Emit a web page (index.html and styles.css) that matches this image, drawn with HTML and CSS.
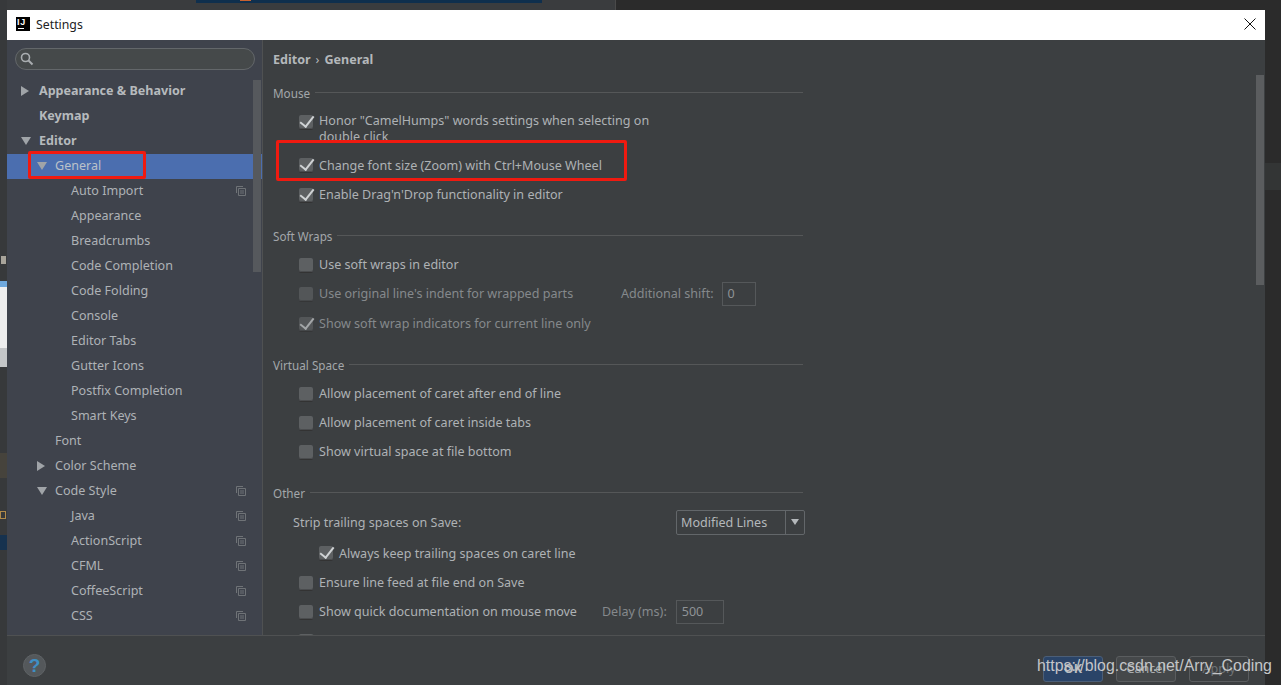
FILE: index.html
```html
<!DOCTYPE html>
<html lang="en">
<head>
<meta charset="utf-8">
<title>Settings</title>
<link rel="stylesheet" href="styles.css">
</head>
<body>
<div class="desk">
  <div class="frag frag-top"></div>
  <div class="frag frag-left"></div>
  <div class="frag frag-bar"></div>
  <div class="frag frag-bar-icon"></div>
  <div class="frag frag-sep2"></div>
  <div class="frag frag-white"></div>
  <div class="frag frag-white-top"></div>
  <div class="frag frag-white-low"></div>
  <div class="frag frag-icon"></div>
  <div class="frag frag-brown"></div>
  <div class="frag frag-orange"></div>
  <div class="frag frag-navy"></div>
  <div class="frag frag-band"></div>
</div>
<div class="dialog">
  <header class="titlebar">
    <span class="logo"><span class="logo-text">IJ</span><span class="logo-line"></span></span>
    <span class="title">Settings</span>
    <svg class="close" width="12" height="12" viewBox="0 0 12 12"><path d="M.5.5l11 11M11.500.5l-11 11" stroke="#111" stroke-width="1" fill="none"/></svg>
  </header>
  <div class="main">
    <aside class="side">
      <div class="search">
        <svg width="14" height="14" viewBox="0 0 14 14"><circle cx="5.500" cy="5.500" r="4" fill="none" stroke="#a9adb0" stroke-width="1.600"/><path d="M8.500 8.500l4 4" stroke="#a9adb0" stroke-width="2"/></svg>
      </div>
      <div class="tree">
        <div class="node bold l0"><i class="arrow right"></i>Appearance &amp; Behavior</div>
        <div class="node bold l0">Keymap</div>
        <div class="node bold l0"><i class="arrow down"></i>Editor</div>
        <div class="node sel l1"><i class="arrow down"></i>General</div>
        <div class="node l2">Auto Import<svg class="copy" viewBox="0 0 10 10"><path d="M.5 7V.5H7M2.500 2.500h7v7h-7zM4 5h4M4 7h4" fill="none" stroke="#6f7377"/></svg></div>
        <div class="node l2">Appearance</div>
        <div class="node l2">Breadcrumbs</div>
        <div class="node l2">Code Completion</div>
        <div class="node l2">Code Folding</div>
        <div class="node l2">Console</div>
        <div class="node l2">Editor Tabs</div>
        <div class="node l2">Gutter Icons</div>
        <div class="node l2">Postfix Completion</div>
        <div class="node l2">Smart Keys</div>
        <div class="node l1">Font</div>
        <div class="node l1"><i class="arrow right"></i>Color Scheme</div>
        <div class="node l1"><i class="arrow down"></i>Code Style<svg class="copy" viewBox="0 0 10 10"><path d="M.5 7V.5H7M2.500 2.500h7v7h-7zM4 5h4M4 7h4" fill="none" stroke="#6f7377"/></svg></div>
        <div class="node l2">Java<svg class="copy" viewBox="0 0 10 10"><path d="M.5 7V.5H7M2.500 2.500h7v7h-7zM4 5h4M4 7h4" fill="none" stroke="#6f7377"/></svg></div>
        <div class="node l2">ActionScript<svg class="copy" viewBox="0 0 10 10"><path d="M.5 7V.5H7M2.500 2.500h7v7h-7zM4 5h4M4 7h4" fill="none" stroke="#6f7377"/></svg></div>
        <div class="node l2">CFML<svg class="copy" viewBox="0 0 10 10"><path d="M.5 7V.5H7M2.500 2.500h7v7h-7zM4 5h4M4 7h4" fill="none" stroke="#6f7377"/></svg></div>
        <div class="node l2">CoffeeScript<svg class="copy" viewBox="0 0 10 10"><path d="M.5 7V.5H7M2.500 2.500h7v7h-7zM4 5h4M4 7h4" fill="none" stroke="#6f7377"/></svg></div>
        <div class="node l2">CSS<svg class="copy" viewBox="0 0 10 10"><path d="M.5 7V.5H7M2.500 2.500h7v7h-7zM4 5h4M4 7h4" fill="none" stroke="#6f7377"/></svg></div>
        <div class="node l2">Gherkin</div>
      </div>
      <div class="side-scroll"></div>
      <div class="redbox redbox-tree"></div>
    </aside>
    <section class="content">
      <h1 class="crumb">Editor<span class="crumb-sep">›</span>General</h1>

      <div class="group-title"><span>Mouse</span></div>
      <div class="row row-wrap"><i class="cb on"></i><span class="wrap-text">Honor "CamelHumps" words settings when selecting on double click</span></div>
      <div class="row row-second"><i class="cb on"></i>Change font size (Zoom) with Ctrl+Mouse Wheel</div>
      <div class="row"><i class="cb on"></i>Enable Drag'n'Drop functionality in editor</div>

      <div class="group-title gt"><span>Soft Wraps</span></div>
      <div class="row"><i class="cb"></i>Use soft wraps in editor</div>
      <div class="row dim"><i class="cb"></i><span class="lbl-wide">Use original line's indent for wrapped parts</span><span class="extra">Additional shift:</span><span class="field field-shift">0</span></div>
      <div class="row dim row-gap"><i class="cb on"></i>Show soft wrap indicators for current line only</div>

      <div class="group-title gt"><span>Virtual Space</span></div>
      <div class="row"><i class="cb"></i>Allow placement of caret after end of line</div>
      <div class="row"><i class="cb"></i>Allow placement of caret inside tabs</div>
      <div class="row"><i class="cb"></i>Show virtual space at file bottom</div>

      <div class="group-title gt"><span>Other</span></div>
      <div class="row row-strip"><span class="strip-label">Strip trailing spaces on Save:</span>
        <span class="combo"><span class="combo-val">Modified Lines</span><span class="combo-btn"><i class="arrow down small"></i></span></span>
      </div>
      <div class="row row-sub"><i class="cb on"></i>Always keep trailing spaces on caret line</div>
      <div class="row"><i class="cb"></i>Ensure line feed at file end on Save</div>
      <div class="row"><i class="cb"></i><span>Show quick documentation on mouse move</span><span class="delay">Delay (ms):</span><span class="field field-delay">500</span></div>
      <div class="row"><i class="cb on"></i></div>

      <div class="scroll-main"></div>
      <div class="redbox redbox-main"></div>
    </section>
  </div>
  <footer class="footer">
    <span class="help">?</span>
    <div class="buttons">
      <span class="btn btn-ok">OK</span>
      <span class="btn">Cancel</span>
      <span class="btn btn-off">Apply</span>
    </div>
  </footer>
</div>
<div class="watermark">https://blog.csdn.net/Arry_Coding</div>
</body>
</html>
```
FILE: styles.css
```css
* { box-sizing: border-box; }
html, body { margin: 0; height: 100%; }
body {
  width: 1281px; height: 685px; overflow: hidden; position: relative;
  background: #2b2b2b;
  font-family: "Noto Sans", sans-serif; font-size: 12.550px; color: #b4b8bb;
}
.frag { position: absolute; }
.frag-top { left: 0; top: 0; width: 615px; height: 10px; background: #3a3c3e; }
.frag-left { left: 0; top: 0; width: 7px; height: 685px; background: #37393b; }
.frag-bar { left: 196px; top: 0; width: 346px; height: 3px; background: #0f2f4d; }
.frag-bar-icon { left: 240px; top: 0; width: 11px; height: 1px; background: #c9622f; }
.frag-sep2 { left: 615px; top: 0; width: 1px; height: 10px; background: #4a4a4a; }
.frag-white { left: 0; top: 283px; width: 7px; height: 84px; background: #eeeeee; }
.frag-white-top { left: 0; top: 281px; width: 7px; height: 6px; background: #6fa8dc; }
.frag-white-low { left: 0; top: 348px; width: 7px; height: 19px; background: #c4c6c8; }
.frag-icon { left: 1px; top: 256px; width: 5px; height: 8px; background: #a8a49a; }
.frag-brown { left: 0; top: 453px; width: 7px; height: 25px; background: #46433c; }
.frag-orange { left: 0; top: 511px; width: 6px; height: 8px; border: 1px solid #b08a4a; }
.frag-navy { left: 0; top: 535px; width: 7px; height: 15px; background: #16324f; }
.frag-band { left: 1265px; top: 163px; width: 16px; height: 27px; background: #333535; }

.dialog {
  position: absolute; left: 7px; top: 10px; width: 1258px; height: 675px;
  display: flex; flex-direction: column; background: #3c3f41;
}
.titlebar {
  flex: 0 0 30px; background: #fff; display: flex; align-items: center;
  padding: 0 9px 2px; color: #222; font-size: 12.300px;
}
.logo {
  width: 14px; height: 14px; background: #000; position: relative; display: block; margin-right: 6px;
}
.logo-text {
  position: absolute; left: 1px; top: 0; color: #fff; font: bold 9px/10px "Liberation Sans", sans-serif; letter-spacing: .8px;
}
.logo-line { position: absolute; left: 2px; bottom: 2px; width: 6px; height: 1px; background: #fff; }
.close { margin-left: auto; }

.main { flex: 0 0 596px; display: flex; overflow: hidden; border-bottom: 1px solid #4f5152; }
.side {
  flex: 0 0 256px; background: #3f434c; border-right: 1px solid #4f5152;
  position: relative; overflow: hidden;
}
.search {
  height: 22px; margin: 8px 7px 9px 8px; border: 1px solid #63676a; border-radius: 11px;
  background: #45494a; display: flex; align-items: center; padding-left: 4px;
}
.tree { width: 255px; }
.node { height: 25px; line-height: 23px; position: relative; white-space: nowrap; color: #aeb2b6; }
.node.bold { font-weight: 700; color: #b6babd; }
.l0 { padding-left: 32px; }
.l1 { padding-left: 48px; }
.l2 { padding-left: 64px; }
.sel { background: #4b6eaf; color: #bbc1c9; }
.arrow { position: absolute; width: 0; height: 0; border-style: solid; border-color: transparent; }
.arrow.right { border-width: 5px 0 5px 8px; border-left-color: #a0a4a8; top: 7px; }
.arrow.down { border-width: 8px 5px 0 5px; border-top-color: #a0a4a8; top: 8px; }
.l0 .arrow { left: 14px; }
.l1 .arrow { left: 30px; }
.arrow.small { position: static; display: block; border-width: 6px 4px 0 4px; border-top-color: #b4b8bb; }
.copy { position: absolute; right: 16px; top: 7px; width: 10px; height: 10px; }
.side-scroll { position: absolute; left: 246px; top: 40px; width: 8px; height: 192px; background: #56595d; }
.redbox { position: absolute; border: 3px solid #f01a10; border-radius: 2px; }
.redbox-tree { left: 21px; top: 111px; width: 118px; height: 28px; }
.redbox-main { left: 13px; top: 100px; width: 351px; height: 41px; }

.content { flex: 1; position: relative; overflow: hidden; padding: 0 0 0 10px; }
.crumb { margin: 0; height: 39px; padding-top: 11px; font-size: 12.550px; line-height: 18px; font-weight: 700; color: #b4b8bb; }
.crumb-sep { font-weight: 400; margin: 0 5px; }
.group-title {
  width: 530px; height: 28px; display: flex; align-items: center; gap: 5px; font-size: 11.700px; color: #a3a7aa;
}
.group-title::after { content: ""; flex: 1; height: 1px; background: #555758; margin-top: -2px; }
.gt { margin-top: 13px; }
.row { height: 29px; display: flex; align-items: center; padding-left: 26px; white-space: nowrap; color: #aeb2b5; }
.row.dim { color: #85898c; }
.row-gap { margin-top: 1px; }
.cb {
  flex: none; width: 14px; height: 14px; margin-right: 6px; border-radius: 2px; position: relative;
  background: #5d6062; box-shadow: inset 0 -1px 0 #4a4c4e, 0 1px 0 #333;
}
.dim .cb { opacity: .7; }
.cb.on::after {
  content: ""; position: absolute; left: 4px; top: -2px; width: 6px; height: 12px;
  border: solid #cfd2d4; border-width: 0 2.500px 2.500px 0; transform: rotate(38deg);
}
.row-wrap { height: 35px; align-items: flex-start; overflow: hidden; margin-top: -1px; padding-top: 7px; }
.row-wrap .cb { margin-top: 2px; }
.wrap-text { white-space: normal; width: 335px; line-height: 16px; }
.row-second { height: 30px; margin-top: 9px; }
.lbl-wide { width: 302px; }
.extra { color: #85898c; }
.field {
  display: block; height: 24px; line-height: 22px; border: 1px solid #55585a; padding-left: 5px; color: #8f9396;
}
.field-shift { width: 34px; margin-left: 8px; }
.delay { color: #85898c; margin-left: 25px; }
.field-delay { width: 48px; margin-left: 9px; }
.row-strip { padding-left: 20px; height: 30px; }
.strip-label { width: 383px; }
.combo {
  width: 129px; height: 25px; border: 1px solid #63676a; border-radius: 2px; display: flex; line-height: 23px; color: #b4b8bb;
}
.combo-val { flex: 1; padding-left: 4px; }
.combo-btn { width: 19px; border-left: 1px solid #63676a; display: flex; align-items: center; justify-content: center; }
.row-sub { padding-left: 46px; height: 30px; margin-top: 1px; }
.scroll-main { position: absolute; right: 1px; top: 35px; width: 8px; height: 210px; background: #5b5d5f; }

.footer { flex: 1; position: relative; display: flex; align-items: flex-start; }
.help {
  width: 23px; height: 23px; border-radius: 50%; background: #54585b; border: 1px solid #5e6265;
  color: #3f8fc4; font: 700 19px/21px "Liberation Sans", sans-serif; text-align: center; margin: 18px 0 0 16px;
}
.buttons { margin: 20px 0 0 auto; padding-right: 16px; display: flex; gap: 13px; }
.btn {
  width: 60px; height: 26px; border: 1px solid #5a5d5f; border-radius: 3px; text-align: center; line-height: 24px;
  color: #a8acaf; background: #45484a;
}
.btn-ok { background: #2a4468; border-color: #4b5e77; color: #b9bdc0; font-weight: 700; }
.btn-off { background: transparent; color: #6f7375; }
.watermark {
  position: absolute; left: 1037px; top: 655px; font: 15.900px/22px "Liberation Sans", sans-serif; color: #c4c6c8; white-space: nowrap;
}
```
